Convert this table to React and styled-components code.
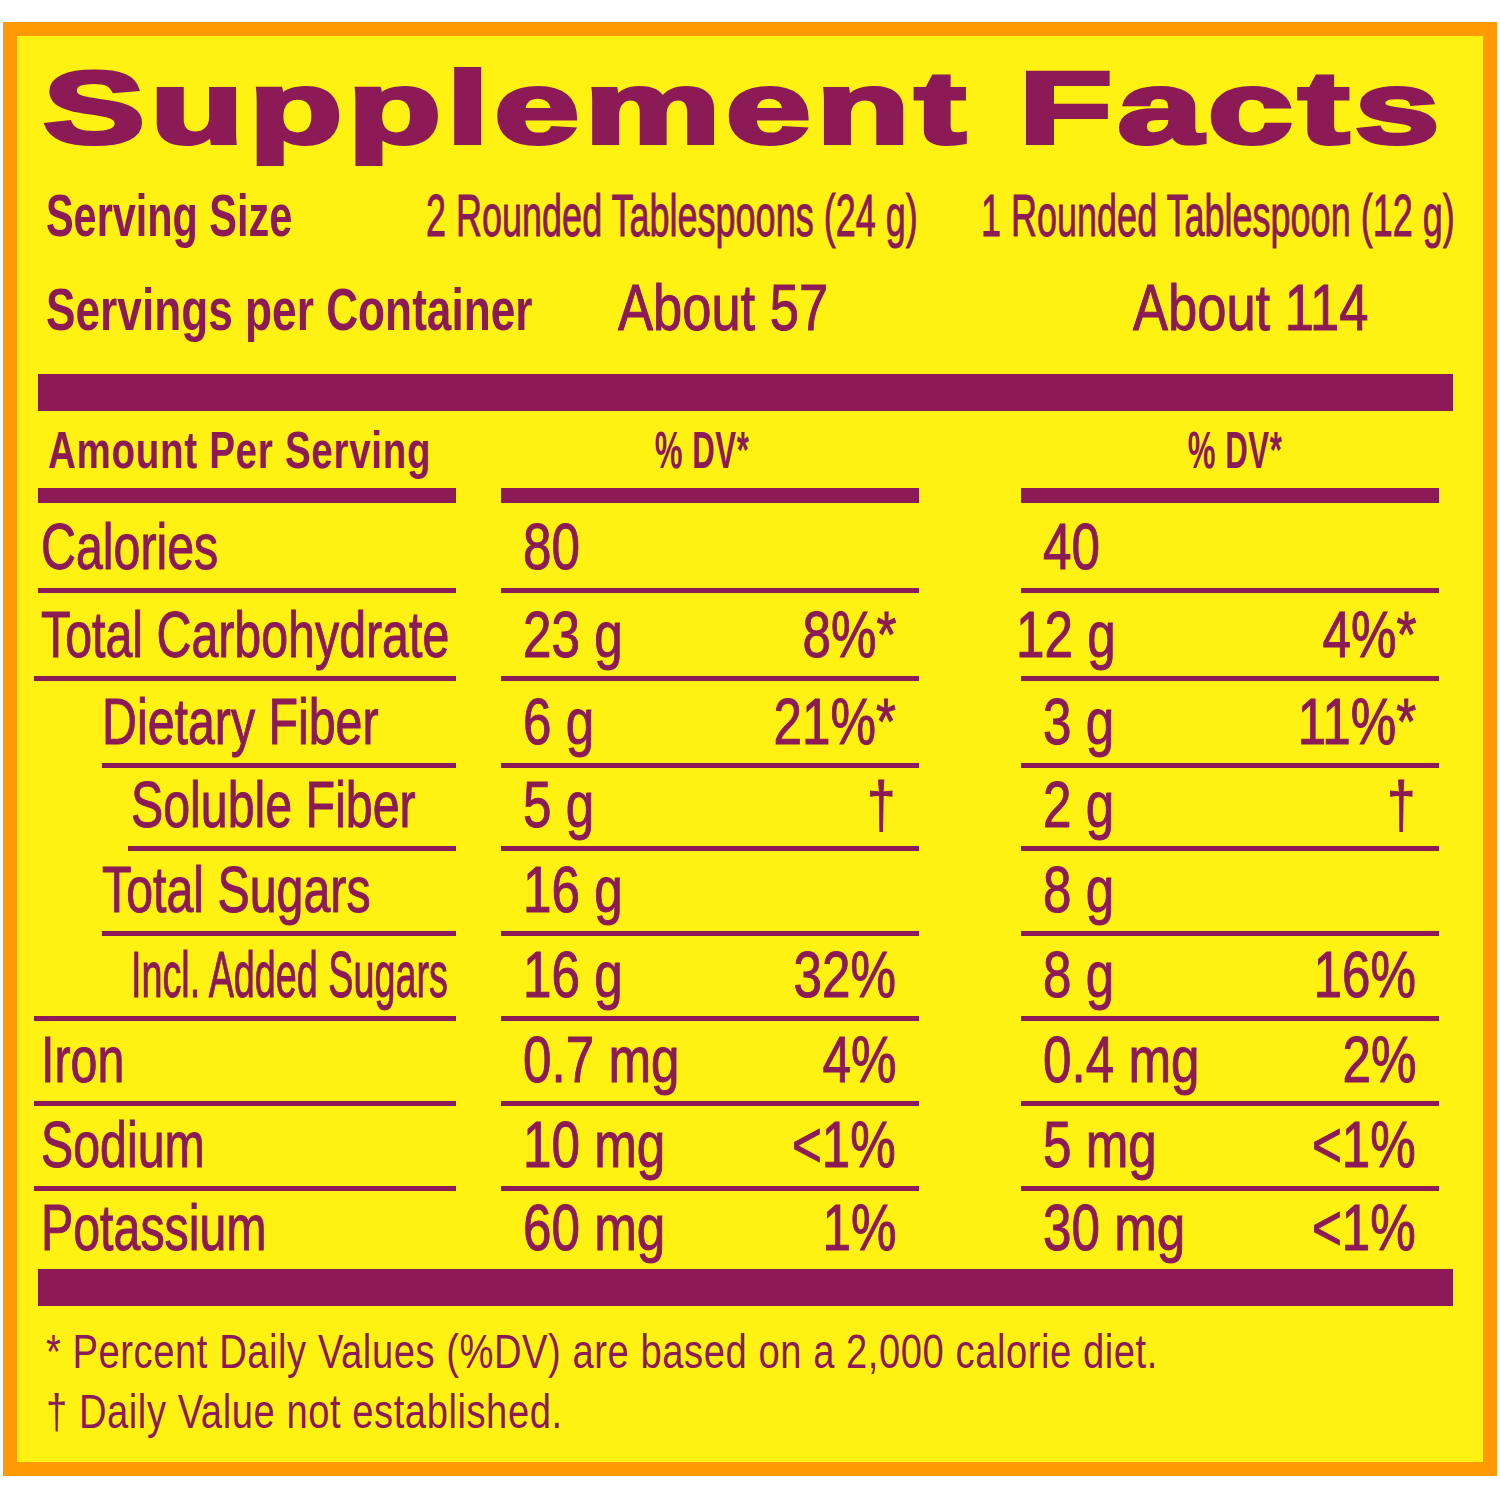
import styled, { createGlobalStyle } from "styled-components"

const PURPLE = "#8b1a56"
const YELLOW = "#fff212"
const ORANGE = "#ff9a05"

const rows = [
  { label: "Calories", indent: 0, pad: 3, h: 90, a: ["80", ""], b: ["40", ""] },
  { label: "Total Carbohydrate", indent: -4, pad: 7, h: 88, a: ["23 g", "8%*"], b: ["12 g", "4%*", -27] },
  { label: "Dietary Fiber", indent: 64, pad: 0, h: 87, a: ["6 g", "21%*"], b: ["3 g", "11%*"] },
  { label: "Soluble Fiber", indent: 90, pad: 3, h: 83, a: ["5 g", "†"], b: ["2 g", "†"] },
  { label: "Total Sugars", indent: 64, pad: 0, h: 85, a: ["16 g", ""], b: ["8 g", ""] },
  { label: "Incl. Added Sugars", indent: -4, pad: 97, h: 85, tight: true, a: ["16 g", "32%"], b: ["8 g", "16%"] },
  { label: "Iron", indent: -4, pad: 7, h: 85, a: ["0.7 mg", "4%"], b: ["0.4 mg", "2%"] },
  { label: "Sodium", indent: -4, pad: 7, h: 85, a: ["10 mg", "<1%"], b: ["5 mg", "<1%"] },
  { label: "Potassium", indent: -4, pad: 7, h: 78, last: true, a: ["60 mg", "1%"], b: ["30 mg", "<1%"] },
]

const SupplementFacts = () => {
  return (
    <Panel>
      <GlobalStyle />
      <Title>
        <span>Supplement Facts</span>
      </Title>

      <Serving>
        <ServingLabel $x={0.69}><span>Serving Size</span></ServingLabel>
        <ServingValue><span>2 Rounded Tablespoons (24 g)</span></ServingValue>
        <ServingValue><span>1 Rounded Tablespoon (12 g)</span></ServingValue>
        <ServingLabel $x={0.737}><span>Servings per Container</span></ServingLabel>
        <ServingValue $big $indent={192}><span>About 57</span></ServingValue>
        <ServingValue $big $indent={152}><span>About 114</span></ServingValue>
      </Serving>

      <ThickBar />

      <Table>
        <Column>
          <Head><HeadText>Amount Per Serving</HeadText></Head>
          {rows.map((r) => (
            <Cell key={r.label} $h={r.h} $last={r.last} $indent={r.indent} $pad={r.pad}>
              <Name $tight={r.tight}>{r.label}</Name>
            </Cell>
          ))}
        </Column>
        {["a", "b"].map((k, i) => (
          <Column key={k} $gap={i === 0 ? 45 : 102}>
            <Head $center $shift={i === 0 ? -8 : 5}>
              <HeadText $dv>% DV*</HeadText>
            </Head>
            {rows.map((r) => (
              <Cell key={r.label} $h={r.h} $last={r.last} $pad={22} $right={23}>
                <Amount $nudge={r[k][2]}>{r[k][0]}</Amount>
                {r[k][1] && <Percent>{r[k][1]}</Percent>}
              </Cell>
            ))}
          </Column>
        ))}
      </Table>

      <ThickBar $gap={0} />

      <Notes>
        <span>* Percent Daily Values (%DV) are based on a 2,000 calorie diet.</span>
        <span>† Daily Value not established.</span>
      </Notes>
    </Panel>
  )
}

const GlobalStyle = createGlobalStyle`
  body {
    margin: 0;
    background: #fff;
  }
`

const Panel = styled.section`
  box-sizing: border-box;
  margin: 22px 0 0 3px;
  width: 1494px;
  height: 1454px;
  border: 14px solid ${ORANGE};
  background: ${YELLOW};
  color: ${PURPLE};
  font-family: "Liberation Sans", Arial, sans-serif;
  overflow: hidden;
`

const Title = styled.h1`
  margin: 0;
  padding: 21px 0 0 26px;
  font-size: 102px;
  line-height: 102px;
  font-weight: 700;
  letter-spacing: 3.5px;
  -webkit-text-stroke: 4px ${PURPLE};
  span {
    display: inline-block;
    white-space: nowrap;
    transform: scaleX(1.5);
    transform-origin: left center;
  }
`

const Serving = styled.div`
  display: grid;
  grid-template-columns: 380px 555px minmax(0, 1fr);
  align-items: baseline;
  row-gap: 32px;
  margin: 27px 0 0 29px;
  line-height: 60px;
  span {
    display: inline-block;
    white-space: nowrap;
    transform-origin: left center;
  }
`

const ServingLabel = styled.div`
  min-width: 0;
  font-size: 60px;
  font-weight: 700;
  span {
    transform: scaleX(${(p) => p.$x});
  }
`

const ServingValue = styled.div`
  min-width: 0;
  font-size: ${(p) => (p.$big ? 64 : 60)}px;
  padding-left: ${(p) => p.$indent || 0}px;
  -webkit-text-stroke: 1px ${PURPLE};
  span {
    transform: scaleX(${(p) => (p.$big ? 0.82 : 0.6)});
  }
`

const ThickBar = styled.div`
  height: 37px;
  margin: ${(p) => (p.$gap ?? 34)}px 30px 0 21px;
  background: ${PURPLE};
`

const Table = styled.div`
  display: flex;
  margin-left: 21px;
`

const Column = styled.div`
  display: flex;
  flex-direction: column;
  width: 418px;
  margin-left: ${(p) => p.$gap || 0}px;
`

const Head = styled.div`
  box-sizing: border-box;
  height: 92px;
  padding: 13px 0 0 ${(p) => (p.$center ? 0 : 10)}px;
  border-bottom: 15px solid ${PURPLE};
  text-align: ${(p) => (p.$center ? "center" : "left")};
  font-size: 52px;
  line-height: 52px;
  font-weight: 700;
  letter-spacing: 1px;
  span {
    position: relative;
    left: ${(p) => p.$shift || 0}px;
  }
`

const HeadText = styled.span`
  display: inline-block;
  white-space: nowrap;
  transform: scaleX(${(p) => (p.$dv ? 0.6 : 0.74)});
  transform-origin: ${(p) => (p.$dv ? "center" : "left")} center;
`

const Cell = styled.div`
  box-sizing: border-box;
  display: flex;
  justify-content: space-between;
  align-items: flex-end;
  height: ${(p) => p.$h}px;
  margin-left: ${(p) => p.$indent || 0}px;
  padding: 0 ${(p) => p.$right || 0}px 9px ${(p) => p.$pad}px;
  border-bottom: ${(p) => (p.$last ? "none" : `5px solid ${PURPLE}`)};
  font-size: 64px;
  line-height: 64px;
  -webkit-text-stroke: 1px ${PURPLE};
`

const Name = styled.span`
  display: inline-block;
  white-space: nowrap;
  transform: scaleX(${(p) => (p.$tight ? 0.59 : 0.755)});
  transform-origin: left center;
`

const Amount = styled.span`
  display: inline-block;
  white-space: nowrap;
  margin-left: ${(p) => p.$nudge || 0}px;
  transform: scaleX(0.8);
  transform-origin: left center;
`

const Percent = styled.span`
  display: inline-block;
  white-space: nowrap;
  transform: scaleX(0.8);
  transform-origin: right center;
`

const Notes = styled.div`
  display: flex;
  flex-direction: column;
  align-items: flex-start;
  margin-top: 16px;
  padding-left: 29px;
  font-size: 48px;
  line-height: 60px;
  letter-spacing: 0.7px;
  span {
    display: inline-block;
    white-space: nowrap;
    transform: scaleX(0.795);
    transform-origin: left center;
  }
`

export default SupplementFacts
